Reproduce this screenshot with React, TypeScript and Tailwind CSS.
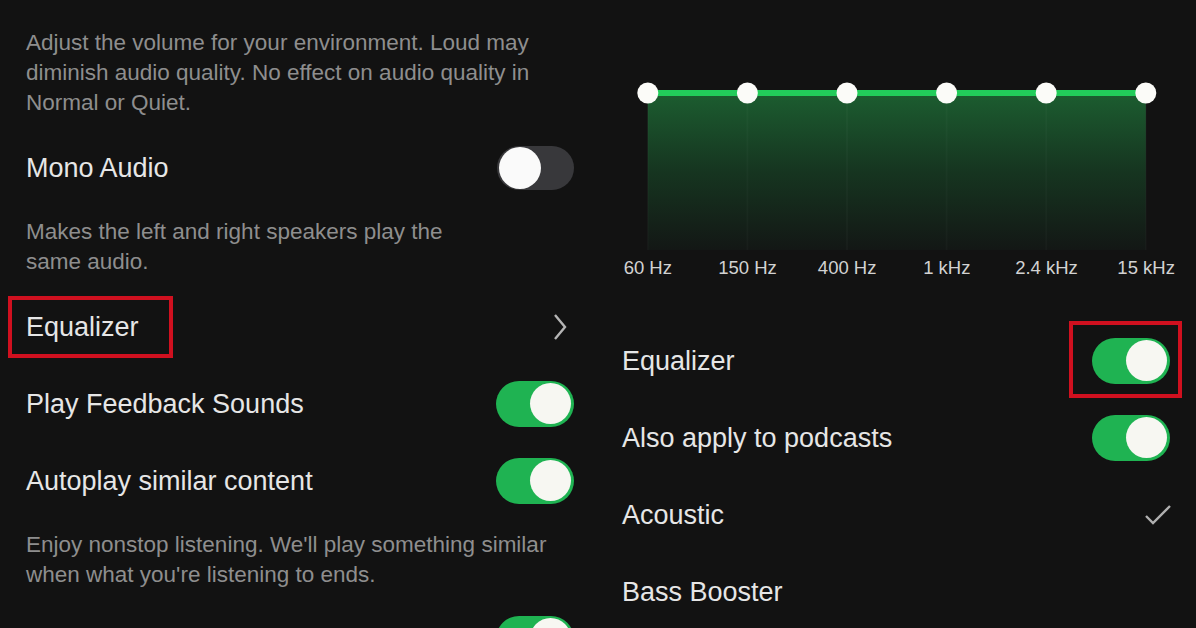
import React from "react";

const font = { fontFamily: '"Liberation Sans", Arial, sans-serif' };

function Toggle({ on }: { on: boolean }) {
  if (on) {
    return (
      <div className="flex h-[46px] w-[78px] items-center justify-end rounded-full bg-[#1fb352] px-[3px]">
        <div className="h-[41px] w-[41px] rounded-full bg-[#f7f7f2]" />
      </div>
    );
  }
  return (
    <div className="flex h-[44px] w-[77px] items-center justify-start rounded-full bg-[#38383b] px-[2px]">
      <div className="h-[42px] w-[42px] rounded-full bg-[#fafafa]" />
    </div>
  );
}

function Row({ label, right, boxed }: { label: string; right: React.ReactNode; boxed?: boolean }) {
  return (
    <div className="flex h-[77px] items-center justify-between">
      <span className="relative text-[27px] leading-[32px] text-[#e6e6e6]">
        {label}
        {boxed && (
          <span className="pointer-events-none absolute -bottom-[15px] -left-[18px] -right-[34px] -top-[15px] border-[4px] border-[#d0101f]" />
        )}
      </span>
      {right}
    </div>
  );
}

function Desc({ children }: { children: React.ReactNode }) {
  return <p className="text-[22.5px] leading-[30px] text-[#8e8e8e]">{children}</p>;
}

const freqs = ["60 Hz", "150 Hz", "400 Hz", "1 kHz", "2.4 kHz", "15 kHz"];

function EqChart() {
  const xs = freqs.map((_, i) => 49.8 + 99.6 * i);
  return (
    <div>
      <svg width="598" height="256" viewBox="0 0 598 256" className="block">
        <defs>
          <linearGradient id="eqfill" x1="0" y1="0" x2="0" y2="1">
            <stop offset="0%" stopColor="#1c5d30" />
            <stop offset="50%" stopColor="#163520" />
            <stop offset="100%" stopColor="#131715" />
          </linearGradient>
          <filter id="glow" x="-10%" y="-200%" width="120%" height="500%">
            <feGaussianBlur stdDeviation="3" />
          </filter>
        </defs>
        <rect x={xs[0]} y={93} width={xs[5] - xs[0]} height={157} fill="url(#eqfill)" />
        {xs.map((x) => (
          <line key={x} x1={x} y1={93} x2={x} y2={250} stroke="rgba(255,255,255,0.025)" strokeWidth={2} />
        ))}
        <line x1={xs[0]} y1={93} x2={xs[5]} y2={93} stroke="#1ed760" strokeWidth={10} opacity={0.35} filter="url(#glow)" />
        <line x1={xs[0]} y1={93} x2={xs[5]} y2={93} stroke="#22cc5a" strokeWidth={6} />
        {xs.map((x) => (
          <circle key={"c" + x} cx={x} cy={93} r={10.5} fill="#fbfbf8" />
        ))}
      </svg>
      <div className="grid h-[24px] grid-cols-6">
        {freqs.map((f) => (
          <div key={f} className="text-center text-[18.5px] leading-[24px] text-[#d2d2d2]">
            {f}
          </div>
        ))}
      </div>
    </div>
  );
}

export default function App() {
  return (
    <div className="flex h-[628px] w-[1196px] overflow-hidden bg-[#121212]" style={font}>
      {/* Left column */}
      <div className="flex w-[598px] flex-col pl-[26px] pr-[24px] pt-[28px]">
        <Desc>
          Adjust the volume for your environment. Loud may diminish audio quality. No effect on audio quality in
          Normal or Quiet.
        </Desc>
        <div className="mt-[11px]">
          <Row label="Mono Audio" right={<Toggle on={false} />} />
        </div>
        <div className="mt-[11px]">
          <Desc>
            Makes the left and right speakers play the
            <br />
            same audio.
          </Desc>
        </div>
        <div className="mt-[11px]">
          <Row
            label="Equalizer"
            boxed
            right={
              <svg width="16" height="28" viewBox="0 0 16 28" className="mr-[6px]">
                <polyline points="3,2 13,14 3,26" fill="none" stroke="#b5b5b5" strokeWidth="2.4" />
              </svg>
            }
          />
          <Row label="Play Feedback Sounds" right={<Toggle on />} />
          <Row label="Autoplay similar content" right={<Toggle on />} />
        </div>
        <div className="mt-[11px]">
          <Desc>
            Enjoy nonstop listening. We'll play something similar when what you're listening to ends.
          </Desc>
        </div>
        <div className="mt-[10px]">
          <div className="flex h-[77px] items-center justify-end">
            <Toggle on />
          </div>
        </div>
      </div>

      {/* Right column */}
      <div className="flex w-[598px] flex-col">
        <EqChart />
        <div className="mt-[42px] flex flex-col pl-[24px] pr-[26px]">
          <Row
            label="Equalizer"
            right={
              <div className="relative">
                <Toggle on />
                <span className="pointer-events-none absolute -bottom-[14px] -left-[23px] -right-[12px] -top-[17px] border-[4px] border-[#d0101f]" />
              </div>
            }
          />
          <Row label="Also apply to podcasts" right={<Toggle on />} />
          <Row
            label="Acoustic"
            right={
              <svg width="28" height="21" viewBox="0 0 28 21" className="mr-[-2px]">
                <polyline points="2,12 9,19 26,2" fill="none" stroke="#b0b0b0" strokeWidth="2.4" />
              </svg>
            }
          />
          <Row label="Bass Booster" right={<span />} />
        </div>
      </div>
    </div>
  );
}
